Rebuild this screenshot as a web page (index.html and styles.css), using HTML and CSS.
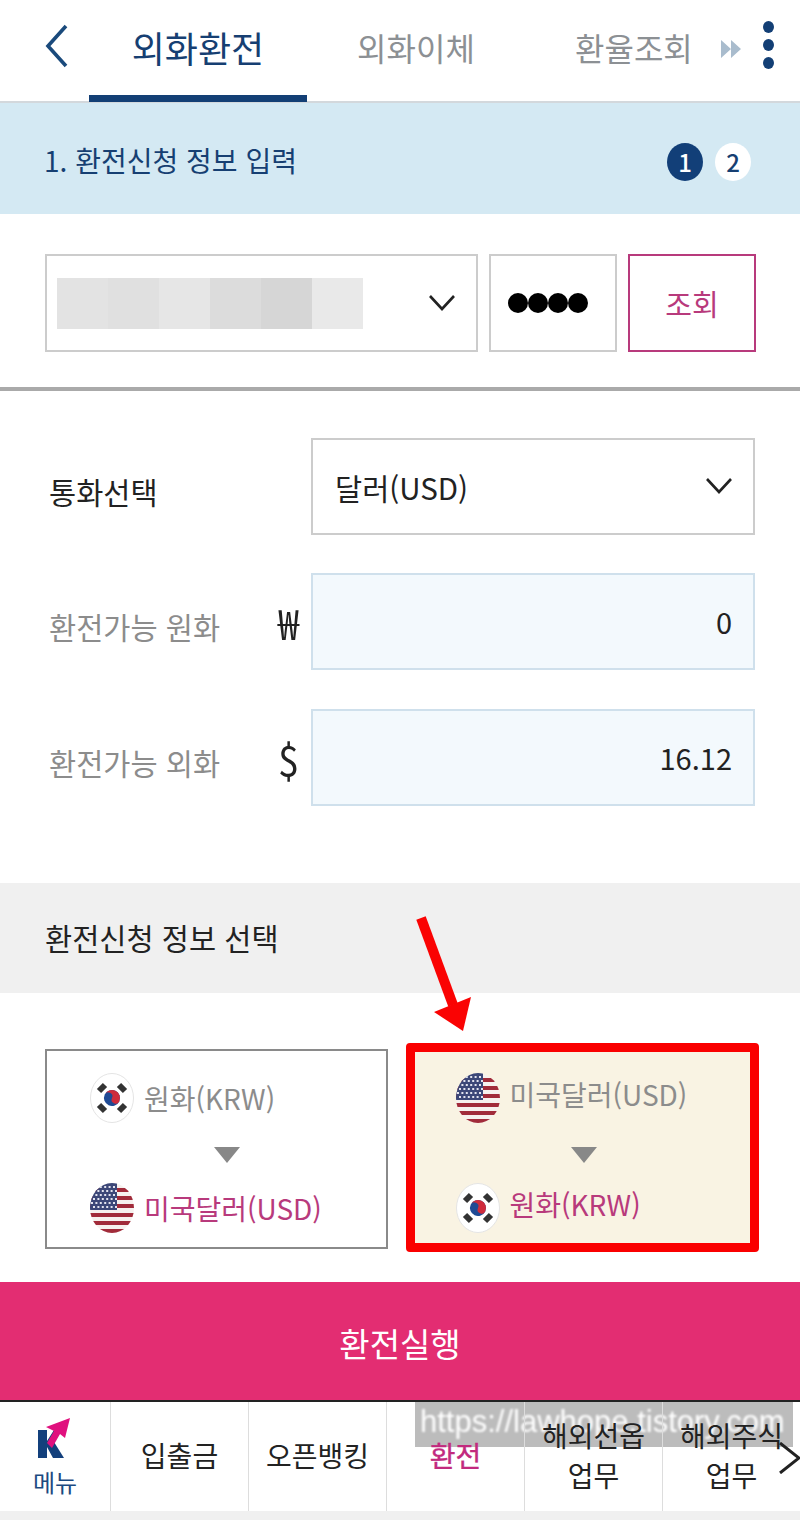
FILE: index.html
```html
<!DOCTYPE html>
<html lang="ko">
<head>
  <meta charset="UTF-8">
  <meta name="viewport" content="width=device-width, initial-scale=1.0">
  <title>외화환전</title>
  <link rel="stylesheet" href="styles.css">
</head>
<body>
  <!-- 국기 심볼 -->
  <svg class="defs" width="0" height="0">
    <defs>
      <clipPath id="flagClip"><ellipse cx="22" cy="25" rx="22" ry="25"/></clipPath>
      <symbol id="flagUs" viewBox="0 0 44 50">
        <g clip-path="url(#flagClip)">
          <rect width="44" height="50" fill="#f6f1ee"/>
          <path d="M0 5h44v4H0zM0 13h44v4H0zM0 21h44v4H0zM0 30h44v4H0zM0 38h44v4H0zM0 46h44v4H0z" fill="#a12b3a"/>
          <rect width="27" height="27" fill="#3c4778"/>
          <path d="M1 4h26M3 8h24M1 12h26M3 16h24M1 20h26M3 24h24" stroke="#e3e4ef" stroke-width="2" stroke-dasharray="2 2.4"/>
        </g>
      </symbol>
      <symbol id="flagKr" viewBox="0 0 44 50">
        <ellipse cx="22" cy="25" rx="21.5" ry="24.5" fill="#fff" stroke="#e4e4e4"/>
        <g transform="translate(22 25) rotate(25)">
          <circle r="8" fill="#1f4a94"/>
          <path d="M-8 0a8 8 0 0 1 16 0a4 4 0 0 1-8 0a4 4 0 0 0-8 0z" fill="#cf2b3c"/>
        </g>
        <path d="M9 18l6-6M29 12l6 6M9 32l6 6M29 38l6-6" stroke="#333" stroke-width="6"/>
      </symbol>
    </defs>
  </svg>

  <header class="topbar">
    <svg class="back" width="24" height="44" viewBox="0 0 24 44"><path d="M21 2L3 22l18 20" fill="none" stroke="#1a4a7c" stroke-width="3.6"/></svg>
    <a class="tab active">외화환전</a>
    <a class="tab">외화이체</a>
    <a class="tab tab-last">환율조회</a>
    <svg class="more-arrows" width="20" height="20" viewBox="0 0 20 20"><path d="M0 1l10 9-10 9zM10 1l10 9-10 9z" fill="#a9bccd"/></svg>
    <div class="kebab"><i></i><i></i><i></i></div>
  </header>

  <div class="step-band">
    <h2>1. 환전신청 정보 입력</h2>
    <div class="steps">
      <span class="step on">1</span>
      <span class="step">2</span>
    </div>
  </div>

  <section class="account-row">
    <div class="box account-select">
      <div class="mosaic"><i></i><i></i><i></i><i></i><i></i><i></i></div>
      <svg class="chevron" width="28" height="18" viewBox="0 0 28 18"><path d="M2 2l12 13L26 2" fill="none" stroke="#222" stroke-width="2.6"/></svg>
    </div>
    <div class="box pin"><i></i><i></i><i></i><i></i></div>
    <button class="lookup">조회</button>
  </section>

  <section class="form">
    <div class="form-row">
      <label class="strong">통화선택</label>
      <div class="box currency">
        <span>달러(USD)</span>
        <svg class="chevron" width="28" height="18" viewBox="0 0 28 18"><path d="M2 2l12 13L26 2" fill="none" stroke="#222" stroke-width="2.6"/></svg>
      </div>
    </div>
    <div class="form-row">
      <label>환전가능 원화</label>
      <span class="unit">₩</span>
      <div class="amount">0</div>
    </div>
    <div class="form-row">
      <label>환전가능 외화</label>
      <span class="unit">$</span>
      <div class="amount">16.12</div>
    </div>
  </section>

  <div class="section-band">환전신청 정보 선택</div>

  <section class="cards">
    <div class="card">
      <div class="line"><svg class="flag"><use href="#flagKr"/></svg><span>원화(KRW)</span></div>
      <div class="tri"></div>
      <div class="line to"><svg class="flag"><use href="#flagUs"/></svg><span>미국달러(USD)</span></div>
    </div>
    <div class="card picked">
      <div class="line"><svg class="flag"><use href="#flagUs"/></svg><span>미국달러(USD)</span></div>
      <div class="tri"></div>
      <div class="line to"><svg class="flag"><use href="#flagKr"/></svg><span>원화(KRW)</span></div>
    </div>
  </section>

  <button class="submit">환전실행</button>

  <nav class="bottom-nav">
    <a class="menu">
      <svg width="34" height="42" viewBox="0 0 34 42">
        <path d="M0 13h9v11l7-11h8l-8 12 10 16H15L9 30v11H0z" fill="#13407c"/>
        <path d="M32 1L8 10l8 4-7 12 5 5 8-14 5 4z" fill="#e0107e"/>
      </svg>
      <span>메뉴</span>
    </a>
    <a>입출금</a>
    <a>오픈뱅킹</a>
    <a class="current">환전</a>
    <a>해외선옵<br>업무</a>
    <a>해외주식<br>업무</a>
  </nav>
  <div class="bottom-gap"></div>

  <!-- 캡처 위에 얹힌 것들 -->
  <svg class="red-arrow" width="60" height="120" viewBox="0 0 60 120">
    <path d="M6 3l32 87" stroke="#fa0303" stroke-width="10" fill="none"/>
    <path d="M19 97l37-15-8 34z" fill="#fa0303"/>
  </svg>
  <div class="watermark"><span>https://lawhope.tistory.com</span></div>
  <svg class="nav-next" width="24" height="32" viewBox="0 0 24 32"><path d="M2 1l19 15L2 31" fill="none" stroke="#222" stroke-width="3"/></svg>
</body>
</html>
```

FILE: styles.css
```css
* {
  box-sizing: border-box;
}

body {
  margin: 0;
  position: relative;
  width: 800px;
  height: 1520px;
  overflow: hidden;
  background: #fff;
  color: #222;
  font-family: "Noto Sans CJK KR", "Noto Sans", sans-serif;
}

.defs {
  display: block;
  height: 0;
}

/* 상단 탭 */
.topbar {
  display: flex;
  align-items: center;
  height: 103px;
  padding-left: 45px;
  border-bottom: 2px solid #d3d8dc;
}

.back {
  width: 24px;
  margin-right: 20px;
  margin-top: -9px;
}

.tab {
  width: 218px;
  height: 103px;
  padding-top: 21px;
  text-align: center;
  font-size: 32px;
  line-height: 54px;
  color: #8c9094;
}

.tab.active {
  color: #163f72;
  font-size: 36px;
  border-bottom: 7px solid #133f75;
}

.tab-last {
  width: auto;
  padding-left: 50px;
}

.more-arrows {
  margin-left: 28px;
  margin-top: -4px;
}

.kebab {
  display: flex;
  flex-direction: column;
  gap: 6px;
  margin-left: 22px;
  margin-top: -11px;
}

.kebab i {
  display: block;
  width: 11px;
  height: 12px;
  border-radius: 50%;
  background: #133f75;
}

/* 단계 */
.step-band {
  display: flex;
  justify-content: space-between;
  align-items: center;
  height: 111px;
  padding: 0 49px 0 45px;
  background: #d4e9f3;
}

.step-band h2 {
  margin: 2px 0 0 -1px;
  font-size: 28px;
  font-weight: 400;
  color: #163f72;
}

.steps {
  display: flex;
  gap: 12px;
  margin-top: 6px;
}

.step {
  width: 36px;
  height: 38px;
  border-radius: 50%;
  background: #fff;
  color: #163f72;
  font-size: 24px;
  font-weight: 500;
  line-height: 37px;
  text-align: center;
}

.step.on {
  background: #123f78;
  color: #fff;
}

/* 계좌 */
.box {
  border: 2px solid #ccc;
  background: #fff;
}

.account-row {
  display: flex;
  gap: 12px;
  height: 177px;
  padding: 40px 44px 0 45px;
  border-bottom: 4px solid #aaa;
}

.account-row > * {
  height: 98px;
}

.account-select {
  display: flex;
  align-items: center;
  width: 433px;
  padding: 0 20px 0 10px;
}

.mosaic {
  display: flex;
  margin-right: auto;
}

.mosaic i {
  width: 51px;
  height: 51px;
  background: #e3e3e3;
}

.mosaic i:nth-child(2) { background: #e0e0e0; }
.mosaic i:nth-child(3) { background: #e6e6e6; }
.mosaic i:nth-child(4) { background: #dcdcdc; }
.mosaic i:nth-child(5) { background: #d6d6d6; }
.mosaic i:nth-child(6) { background: #e9e9e9; }

.pin {
  display: flex;
  align-items: center;
  justify-content: center;
  width: 128px;
  margin-left: -1px;
  padding-right: 10px;
}

.pin i {
  width: 20px;
  height: 20px;
  border-radius: 50%;
  background: #000;
}

.lookup {
  width: 128px;
  margin-left: -1px;
  border: 2px solid #b83a7c;
  background: #fff;
  color: #b83a7c;
  font: inherit;
  font-size: 29px;
}

/* 입력 폼 */
.form {
  display: flex;
  flex-direction: column;
  gap: 38px;
  height: 492px;
  padding: 47px 45px 0 49px;
}

.form-row {
  display: flex;
  align-items: center;
  height: 97px;
}

.form-row:last-child {
  margin-top: 1px;
}

.form-row label {
  width: 228px;
  padding-top: 8px;
  font-size: 29.5px;
  color: #8c8c8c;
}

.form-row label.strong {
  width: 262px;
  color: #222;
}

.unit {
  width: 22px;
  margin-right: 12px;
  font-size: 42px;
  text-align: center;
  transform: scaleX(0.9);
}

.currency {
  display: flex;
  flex: 1;
  align-items: center;
  justify-content: space-between;
  height: 97px;
  padding: 0 20px 0 22px;
  font-size: 29.5px;
}

.currency .chevron {
  margin-top: -2px;
}

.amount {
  flex: 1;
  height: 97px;
  padding: 0 21px;
  border: 2px solid #cfe0ec;
  background: #f3f9fd;
  font-size: 29px;
  line-height: 92px;
  text-align: right;
}

/* 환전 방향 */
.section-band {
  height: 110px;
  padding: 33px 45px 0;
  background: #f0f0f0;
  font-size: 29.5px;
  line-height: 42px;
}

.cards {
  display: flex;
  align-items: flex-start;
  gap: 18px;
  height: 289px;
  padding: 56px 41px 0 45px;
}

.card {
  display: flex;
  flex-direction: column;
  width: 343px;
  height: 200px;
  padding: 22px 0 0 43px;
  border: 2px solid #8a8a8a;
}

.card.picked {
  width: 354px;
  height: 209px;
  margin-top: -6px;
  padding: 21px 0 0 41px;
  border: 9px solid #fa0000;
  border-radius: 4px;
  background: #f9f3e3;
}

.line {
  display: flex;
  align-items: center;
  gap: 10px;
  height: 50px;
  font-size: 28px;
  color: #8c8c8c;
}

.picked .line span {
  margin-top: -8px;
}

.line.to {
  color: #b83a7c;
}

.flag {
  width: 44px;
  height: 50px;
}

.tri {
  width: 0;
  height: 0;
  margin: 24px 0 20px 124px;
  border-left: 13px solid transparent;
  border-right: 13px solid transparent;
  border-top: 16px solid #888;
}

.picked .tri {
  margin-left: 115px;
}

.submit {
  display: block;
  width: 100%;
  height: 118px;
  padding-top: 4px;
  border: none;
  background: #e32d72;
  color: #fff;
  font: inherit;
  font-size: 33px;
}

/* 하단 메뉴 */
.bottom-nav {
  position: relative;
  z-index: 2;
  display: grid;
  grid-template-columns: 111px repeat(5, 138px);
  height: 111px;
  border-top: 2px solid #222;
}

.bottom-nav a {
  display: flex;
  flex-direction: column;
  align-items: center;
  justify-content: center;
  padding-bottom: 3px;
  border-right: 1px solid #ddd;
  font-size: 28px;
  line-height: 40px;
  text-align: center;
}

.bottom-nav a.current {
  color: #c22a7e;
  -webkit-text-stroke: 0.4px #c22a7e;
}

.bottom-nav a.menu {
  padding: 1px 0 0;
  color: #1c4a80;
  font-size: 24px;
  line-height: 32px;
  gap: 7px;
}

.bottom-gap {
  height: 9px;
  background: #f0f0f0;
}

/* 겹치는 요소 */
.red-arrow {
  position: absolute;
  left: 415px;
  top: 915px;
}

.watermark {
  position: absolute;
  z-index: 1;
  left: 415px;
  top: 1402px;
  width: 378px;
  height: 45px;
  padding-left: 5px;
  background: #bcbcbc;
  color: #fff;
  font-family: "Liberation Sans", sans-serif;
  font-size: 31px;
  line-height: 40px;
  white-space: nowrap;
  overflow: hidden;
}

.watermark span {
  filter: blur(1.2px);
  display: block;
}

.nav-next {
  position: absolute;
  z-index: 3;
  left: 778px;
  top: 1442px;
}
```
